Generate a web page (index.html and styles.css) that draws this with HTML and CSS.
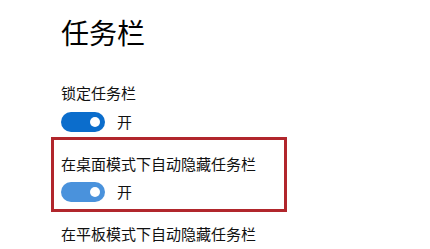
FILE: index.html
```html
<!DOCTYPE html>
<html lang="zh-CN">
<head>
  <meta charset="UTF-8">
  <meta name="viewport" content="width=device-width, initial-scale=1.0">
  <title>任务栏</title>
  <link rel="stylesheet" href="styles.css">
</head>
<body>
  <div class="page">
    <h1 class="title">任务栏</h1>

    <div class="setting">
      <div class="label">锁定任务栏</div>
      <div class="switch-row">
        <span class="switch on"><span class="knob"></span></span>
        <span class="state">开</span>
      </div>
    </div>

    <div class="setting highlight">
      <div class="label">在桌面模式下自动隐藏任务栏</div>
      <div class="switch-row">
        <span class="switch on light"><span class="knob"></span></span>
        <span class="state">开</span>
      </div>
    </div>

    <div class="setting last">
      <div class="label">在平板模式下自动隐藏任务栏</div>
    </div>
  </div>
</body>
</html>
```

FILE: styles.css
```css
* {
  box-sizing: border-box;
}

body {
  margin: 0;
  background: #fff;
  color: #111;
  font-family: "Noto Sans CJK SC", "Noto Sans", sans-serif;
  overflow: hidden;
}

.page {
  padding: 18px 0 0 61px;
}

.title {
  margin: 0;
  font-size: 28px;
  line-height: 28px;
  font-weight: 400;
  color: #000;
}

.setting {
  margin-top: 39px;
}

.label {
  font-size: 15px;
  line-height: 16px;
}

.switch-row {
  display: flex;
  align-items: center;
  margin-top: 11px;
}

.switch {
  display: flex;
  align-items: center;
  justify-content: flex-end;
  width: 44px;
  height: 20px;
  padding: 0 5px;
  border-radius: 10px;
  background: #0b6dcc;
}

.switch.light {
  background: #4a92dc;
}

.knob {
  width: 10px;
  height: 10px;
  border-radius: 50%;
  background: #fff;
}

.state {
  margin-left: 12px;
  font-size: 15px;
  line-height: 16px;
}

.highlight {
  width: 236px;
  margin: 5px 0 0 -10px;
  padding: 16px 0 7px 7px;
  border: 3px solid #b1262c;
}

.highlight .switch-row {
  margin-top: 10px;
}

.last {
  margin-top: 14px;
}
```
